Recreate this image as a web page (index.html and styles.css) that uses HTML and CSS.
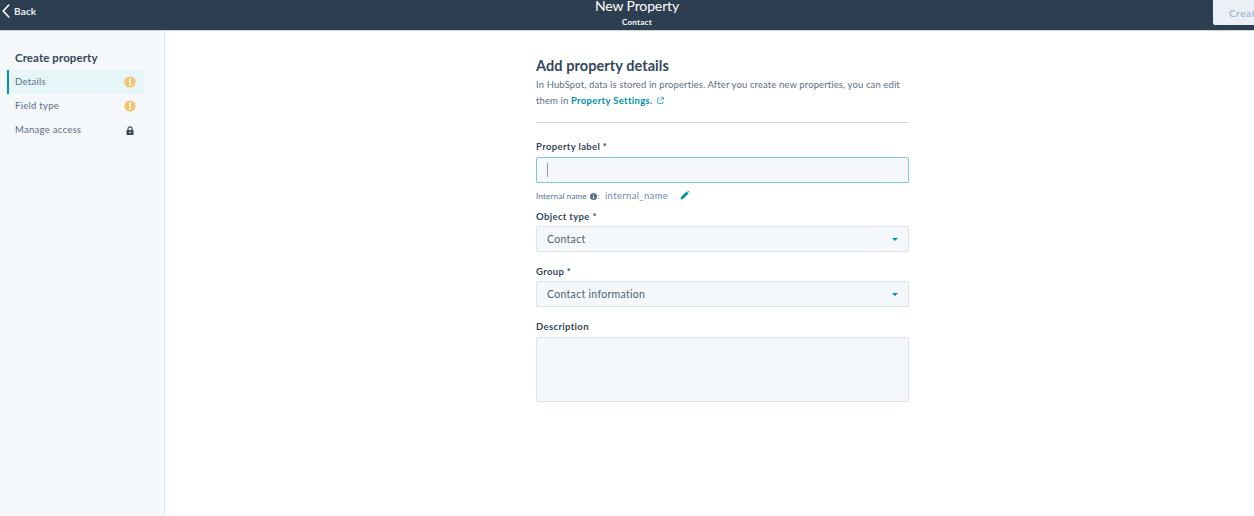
FILE: index.html
```html
<!DOCTYPE html>
<html lang="en">
<head>
<meta charset="utf-8">
<title>New Property</title>
<link rel="stylesheet" href="styles.css">
</head>
<body>
<header class="topbar">
  <a class="back"><svg class="back-icon" viewBox="0 0 8 14" width="8" height="14"><path d="M6.8 1 1.2 7l5.6 6" fill="none" stroke="#fff" stroke-width="1.6" stroke-linecap="round" stroke-linejoin="round"/></svg><span>Back</span></a>
  <div class="title">
    <div class="title-main">New Property</div>
    <div class="title-sub">Contact</div>
  </div>
  <div class="actions"><button class="create">Create</button></div>
</header>
<div class="body">
  <aside class="sidebar">
    <h2 class="side-title">Create property</h2>
    <ul class="steps">
      <li class="step active"><span>Details</span><svg class="badge" viewBox="0 0 12 12" width="12" height="12"><circle cx="6" cy="6" r="5.6" fill="#f5c26b"/><path d="M6 2.8v3.6" stroke="#fff" stroke-width="1.7" stroke-linecap="round"/><circle cx="6" cy="8.8" r=".95" fill="#fff"/></svg></li>
      <li class="step"><span>Field type</span><svg class="badge" viewBox="0 0 12 12" width="12" height="12"><circle cx="6" cy="6" r="5.6" fill="#f5c26b"/><path d="M6 2.8v3.6" stroke="#fff" stroke-width="1.7" stroke-linecap="round"/><circle cx="6" cy="8.8" r=".95" fill="#fff"/></svg></li>
      <li class="step"><span>Manage access</span><svg class="badge" viewBox="0 0 12 12" width="12" height="12"><path d="M4 5.2V3.8a2 2 0 0 1 4 0v1.4" fill="none" stroke="#33475b" stroke-width="1.2"/><rect x="2.5" y="5" width="7" height="5" rx=".8" fill="#33475b"/><circle cx="6" cy="7.4" r=".8" fill="#fff"/></svg></li>
    </ul>
  </aside>
  <main class="main">
    <form class="form">
      <h1 class="heading">Add property details</h1>
      <p class="intro">In HubSpot, data is stored in properties. After you create new properties, you can edit them in <a class="link">Property Settings.</a><svg class="ext" viewBox="0 0 8 8" width="7" height="7"><path d="M3 1.3H1.2a.5.5 0 0 0-.5.5v5a.5.5 0 0 0 .5.5h5a.5.5 0 0 0 .5-.5V5M4.6.7h2.7v2.7M7.2.8 3.6 4.4" fill="none" stroke="#0091ae" stroke-width=".8"/></svg></p>
      <hr class="rule">
      <label class="label first">Property label *</label>
      <div class="field focused"><span class="caret"></span></div>
      <div class="internal"><span class="internal-key">Internal name</span><svg class="info" viewBox="0 0 8 8" width="7" height="7"><circle cx="4" cy="4" r="4" fill="#516f90"/><rect x="3.4" y="3.4" width="1.2" height="3" fill="#fff"/><rect x="3.4" y="1.6" width="1.2" height="1.1" fill="#fff"/></svg><span class="internal-key colon">:</span><span class="internal-val">internal_name</span><svg class="pencil" viewBox="0 0 10 10" width="10" height="10"><path d="M.6 9.4l.6-2.6L6.6 1.4l2 2L3.2 8.8z" fill="#0091ae"/><path d="M7.2.8l.6-.4 1.8 1.8-.4.6z" fill="#0091ae"/></svg></div>
      <label class="label object">Object type *</label>
      <div class="field select"><span>Contact</span><i class="arrow"></i></div>
      <label class="label group">Group *</label>
      <div class="field select"><span>Contact information</span><i class="arrow"></i></div>
      <label class="label description">Description</label>
      <div class="field area"></div>
    </form>
  </main>
</div>
</body>
</html>
```
FILE: styles.css
```css
* { box-sizing: border-box; }
html, body { margin: 0; height: 516px; overflow: hidden; background: #fff; }
body { font-family: "Lato", "Open Sans", sans-serif; color: #33475b; display: flex; flex-direction: column; }

.topbar { height: 31px; flex: none; background: #2d3e50; border-bottom: 1px solid #cbd6e2; display: flex; align-items: flex-start; color: #fff; overflow: hidden; }
.back { flex: none; width: 564px; display: flex; align-items: center; gap: 4px; height: 22px; padding-left: 2px; font-size: 10px; font-weight: 700; letter-spacing: .15px; color: #eaf0f6; }
.title { flex: none; width: 146px; text-align: center; margin-top: -3px; }
.title-main { font-size: 14px; line-height: 18px; letter-spacing: -.12px; }
.title-sub { font-size: 8px; line-height: 12px; margin-top: 1px; font-weight: 700; letter-spacing: .25px; }
.actions { flex: 1; min-width: 0; padding-left: 503px; display: flex; }
.create { flex: none; width: 60px; height: 25px; background: #eaf0f6; border: 0; border-radius: 0 0 0 2px; padding: 0 0 0 16px; font: 700 10px "Lato", sans-serif; letter-spacing: .5px; color: #a6b9cd; text-align: left; white-space: nowrap; }

.body { flex: 1; display: flex; min-height: 0; }
.sidebar { width: 165px; flex: none; background: #f5f8fa; border-right: 1px solid #dfe3eb; padding: 20px 20px 0 7px; }
.side-title { margin: 0 0 6px 8px; font-size: 11.5px; line-height: 13px; font-weight: 700; letter-spacing: .08px; color: #33475b; }
.steps { list-style: none; margin: 0; padding: 0; }
.step { height: 24.3px; display: flex; justify-content: space-between; align-items: center; padding: 0 8px 0 6px; font-size: 9.5px; letter-spacing: .28px; color: #5a6f85; border-left: 2px solid transparent; }
.step span { margin-top: -2px; }
.step.active { background: #e5f5f8; border-left-color: #0091ae; }

.main { flex: 1; min-width: 0; display: flex; padding-left: 371px; }
.form { width: 373px; padding-top: 26px; }
.heading { margin: 0; font-size: 14.5px; line-height: 17px; font-weight: 700; letter-spacing: .07px; color: #33475b; }
.intro { margin: 3px 0 0; font-size: 9.5px; line-height: 16px; letter-spacing: .11px; color: #5a6f85; }
.link { color: #0091ae; font-weight: 700; letter-spacing: .33px; }
.ext { margin-left: 4px; }
.rule { margin: 13px 0 0; border: 0; border-top: 1px solid #cbd6e2; }
.label { display: block; font-size: 9.5px; line-height: 12px; font-weight: 700; letter-spacing: .35px; color: #33475b; }
.label.first { margin-top: 18px; }
.label.object { margin-top: 8px; }
.label.group { margin-top: 14px; }
.label.description { margin-top: 14px; }
.field { margin-top: 3px; height: 26px; background: #f5f8fa; border: 1px solid #dbe3ec; border-radius: 2px; display: flex; align-items: center; justify-content: space-between; padding: 0 10px; font-size: 10.5px; letter-spacing: .3px; color: #4a5f74; }
.field.focused { border-color: #7fc6d6; margin-top: 4px; justify-content: flex-start; padding-left: 9.5px; }
.caret { width: 1px; height: 14px; background: #8a9bad; }
.arrow { width: 0; height: 0; border: 3.5px solid transparent; border-top: 3.5px solid #0091ae; border-bottom: 0; }
.area { height: 65px; margin-top: 4px; }
.internal { display: flex; align-items: center; height: 14px; margin-top: 6px; font-size: 8px; color: #516f90; letter-spacing: .2px; }
.info { margin-left: 3px; }
.colon { margin-left: 1px; }
.internal-val { margin-left: 5px; margin-top: -2px; font-size: 9.5px; letter-spacing: .33px; color: #6f8cab; }
.pencil { margin-left: 12px; margin-top: -3px; }
```
